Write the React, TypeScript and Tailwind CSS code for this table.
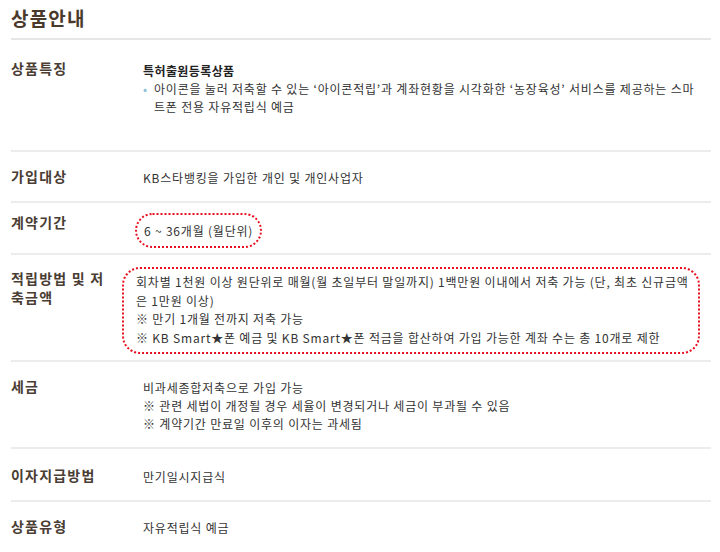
const font = { fontFamily: '"Noto Sans CJK KR", "Noto Sans", sans-serif' };

function Row({
  label,
  height,
  pt = 'pt-[15px]',
  last = false,
  children,
}: {
  label: React.ReactNode;
  height: string;
  pt?: string;
  last?: boolean;
  children: React.ReactNode;
}) {
  return (
    <div className={`flex ${height} ${pt} ${last ? '' : 'border-b-2 border-[#ececec]'}`}>
      <div className="w-[132px] shrink-0 whitespace-nowrap text-[14px] leading-[19px] tracking-[1.2px] font-bold text-[#4a3d33]">
        {label}
      </div>
      <div className="flex-1 pt-[2px] text-[12px] leading-[18px] tracking-[0.8px] text-[#333]">{children}</div>
    </div>
  );
}

export default function App() {
  return (
    <div className="w-[720px] h-[552px] bg-white pl-[11px] pr-[9px] overflow-hidden" style={font}>
      <div className="h-[40px] pt-[5px] border-b-2 border-[#e6e6e6]">
        <h1 className="text-[19px] leading-[26px] tracking-[1.2px] font-bold text-[#4a3a2c]">상품안내</h1>
      </div>

      <Row label="상품특징" height="h-[112px]" pt="pt-[19px]">
        <div className="pt-[1px]">
          <p className="font-bold text-[#222] tracking-[0.4px]">특허출원등록상품</p>
          <div className="flex">
            <span className="w-[11px] shrink-0 text-[#8ec5d6]">•</span>
            <p className="whitespace-nowrap">
              아이콘을 눌러 저축할 수 있는 ‘아이콘적립’과 계좌현황을 시각화한 ‘농장육성’ 서비스를 제공하는 스마
              <br />
              트폰 전용 자유적립식 예금
            </p>
          </div>
        </div>
      </Row>

      <Row label="가입대상" height="h-[51px]">
        <p>KB스타뱅킹을 가입한 개인 및 개인사업자</p>
      </Row>

      <Row label="계약기간" height="h-[52px]" pt="pt-[10px]">
        <div className="-ml-[8px] -mt-[2px] inline-flex items-center h-[35px] px-[7px] rounded-full border-2 border-dotted border-[#e8101f]">
          6 ~ 36개월 (월단위)
        </div>
      </Row>

      <Row
        label={
          <>
            적립방법 및 저<br />
            축금액
          </>
        }
        height="h-[107px]"
        pt="pt-[14px]"
      >
        <div className="-ml-[21px] -mt-[4px] mr-[11px] h-[87px] pl-[12px] pt-[4px] rounded-[18px] border-2 border-dotted border-[#e8101f] whitespace-nowrap leading-[18.5px]">
          회차별 1천원 이상 원단위로 매월(월 초일부터 말일까지) 1백만원 이내에서 저축 가능 (단, 최초 신규금액
          <br />
          은 1만원 이상)
          <br />※ 만기 1개월 전까지 저축 가능
          <br />※ KB Smart★폰 예금 및 KB Smart★폰 적금을 합산하여 가입 가능한 계좌 수는 총 10개로 제한
        </div>
      </Row>

      <Row label="세금" height="h-[87px]">
        <p>비과세종합저축으로 가입 가능</p>
        <p>※ 관련 세법이 개정될 경우 세율이 변경되거나 세금이 부과될 수 있음</p>
        <p>※ 계약기간 만료일 이후의 이자는 과세됨</p>
      </Row>

      <Row label="이자지급방법" height="h-[53px]" pt="pt-[17px]">
        <p>만기일시지급식</p>
      </Row>

      <Row label="상품유형" height="h-[52px]" last>
        <p>자유적립식 예금</p>
      </Row>
    </div>
  );
}
